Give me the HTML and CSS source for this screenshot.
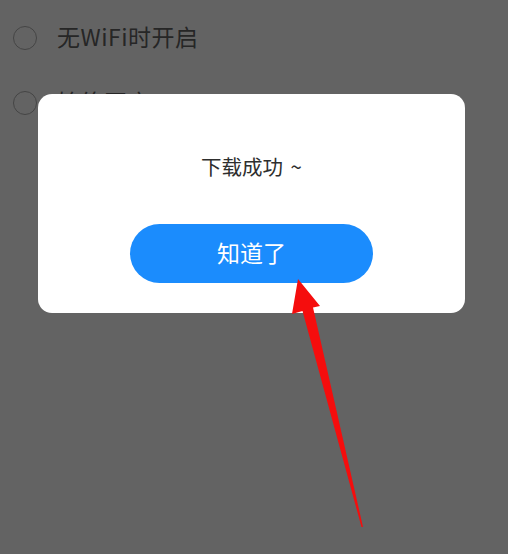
FILE: index.html
```html
<!DOCTYPE html>
<html lang="zh">
<head>
<meta charset="utf-8">
<link rel="stylesheet" href="styles.css">
</head>
<body>
<div class="screen">
  <ul class="options">
    <li class="option"><span class="radio"></span><span class="label">无WiFi时开启</span></li>
    <li class="option"><span class="radio"></span><span class="label">始终开启</span></li>
  </ul>
  <div class="dialog">
    <p class="message">下载成功 ~</p>
    <button class="confirm">知道了</button>
  </div>
  <svg class="arrow" width="508" height="554" viewBox="0 0 508 554">
    <polygon points="298,279 320,306 313,307.5 363,527 361.5,527 302.5,311 292,314" fill="#f50d0d"/>
  </svg>
</div>
</body>
</html>
```

FILE: styles.css
```css
html, body {
  margin: 0;
  padding: 0;
}
body {
  background: #636363;
  font-family: "Noto Sans CJK SC", "Noto Sans", sans-serif;
}
.screen {
  position: relative;
  width: 508px;
  height: 554px;
  overflow: hidden;
}
.options {
  list-style: none;
  margin: 0;
  padding: 5px 0 0 13px;
}
.option {
  display: flex;
  align-items: center;
  height: 65px;
  gap: 20px;
}
.radio {
  width: 22px;
  height: 22px;
  border: 1.5px solid #454545;
  border-radius: 50%;
  flex: none;
}
.label {
  font-size: 23px;
  color: #262626;
  line-height: 30px;
  padding-bottom: 3px;
  letter-spacing: 0.5px;
}
.dialog {
  position: absolute;
  left: 38px;
  top: 94px;
  width: 427px;
  height: 219px;
  box-sizing: border-box;
  background: #fff;
  border-radius: 14px;
  display: flex;
  flex-direction: column;
  align-items: center;
  padding-top: 60px;
}
.message {
  margin: 0;
  font-size: 20.5px;
  line-height: 24px;
  color: #2e2e2e;
  word-spacing: 3px;
}
.confirm {
  margin-top: 46px;
  width: 243px;
  height: 59px;
  border: none;
  border-radius: 30px;
  background: #1b8cfd;
  color: #fff;
  font-family: "Noto Sans CJK SC", "Noto Sans", sans-serif;
  font-size: 23px;
  padding: 0 0 4px;
}
.arrow {
  position: absolute;
  left: 0;
  top: 0;
}
```
